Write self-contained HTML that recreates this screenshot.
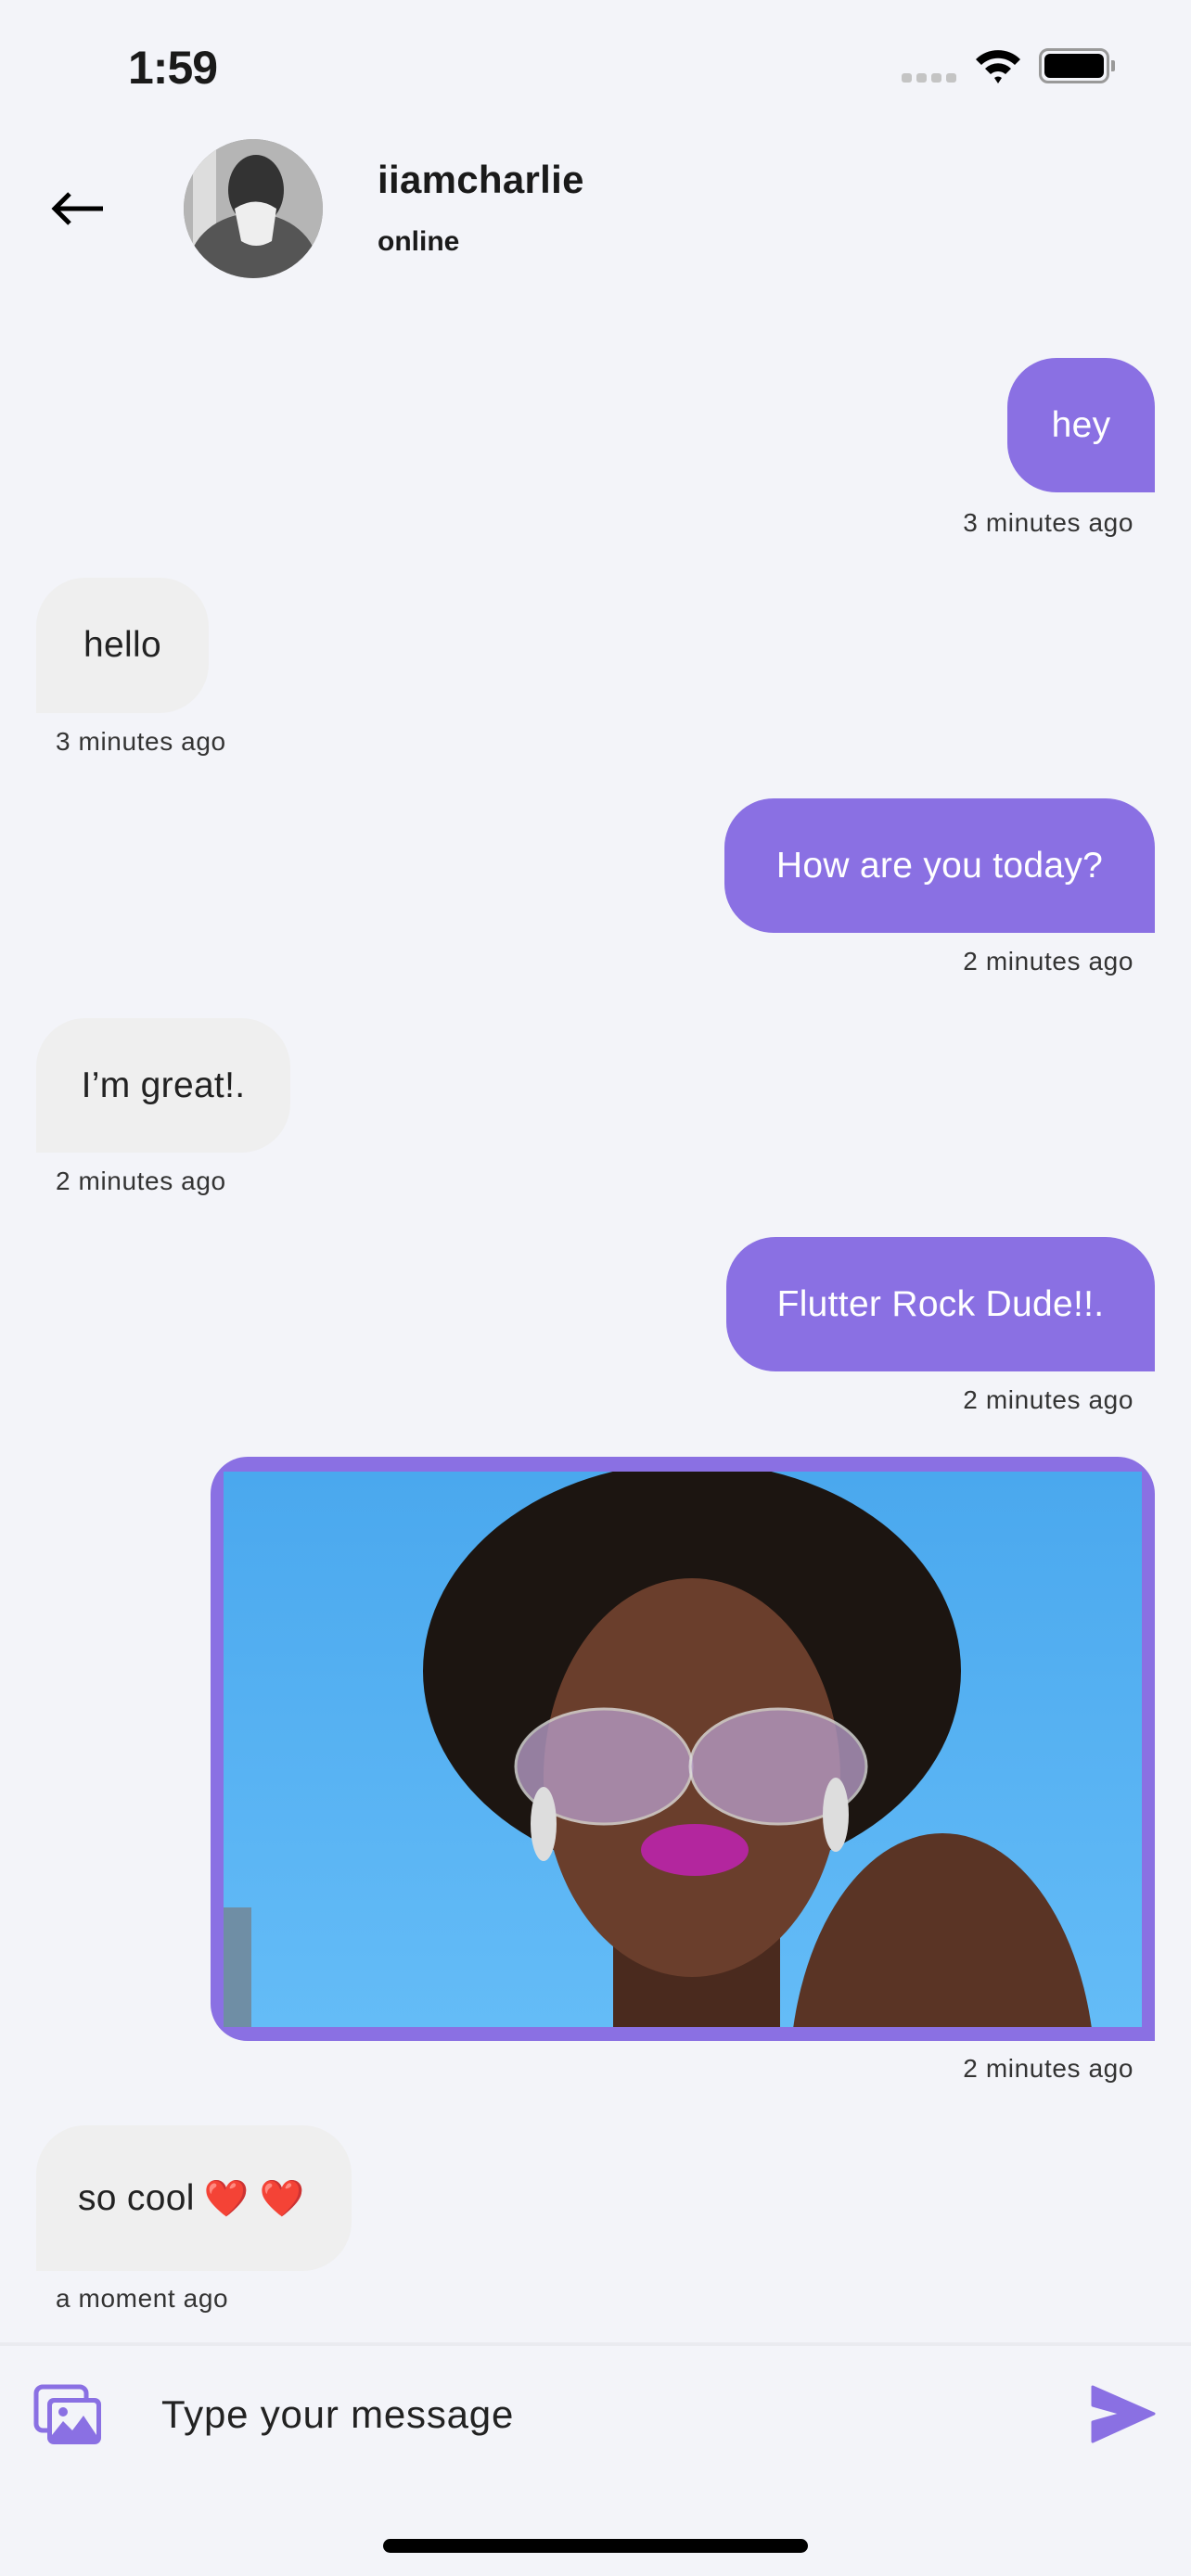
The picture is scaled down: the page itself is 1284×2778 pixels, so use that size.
<!DOCTYPE html>
<html><head><meta charset="utf-8"><style>
*{margin:0;padding:0;box-sizing:border-box}
body{width:1284px;height:2778px;background:#f3f4f9;font-family:"Liberation Sans",sans-serif;position:relative;overflow:hidden;color:#1a1a1a}
.a{position:absolute}
.out{position:absolute;background:#8a70e3;color:#fff;font-size:39px;border-radius:53px 53px 0 53px;display:flex;align-items:center;justify-content:center;letter-spacing:0.3px}
.in{position:absolute;background:#efefef;color:#222;font-size:39px;border-radius:53px 53px 53px 0;display:flex;align-items:center;justify-content:center;letter-spacing:0.3px}
.ts{position:absolute;font-size:28px;color:#333;letter-spacing:0.6px}
.tr{right:62px;text-align:right}
</style></head><body>
<div class="a" style="left:138px;top:44px;font-size:50px;font-weight:bold;letter-spacing:-1px">1:59</div>
<div class="a" style="left:972px;top:79px;width:60px;height:10px">
<span class="a" style="left:0;width:11px;height:10px;background:#c4c4c4;border-radius:3px"></span>
<span class="a" style="left:16px;width:11px;height:10px;background:#c4c4c4;border-radius:3px"></span>
<span class="a" style="left:32px;width:11px;height:10px;background:#c4c4c4;border-radius:3px"></span>
<span class="a" style="left:48px;width:11px;height:10px;background:#c4c4c4;border-radius:3px"></span></div>
<svg class="a" style="left:1050px;top:50px" width="52" height="40" viewBox="0 0 52 40"><path d="M2 14 A34 34 0 0 1 50 14 L44 20 A26 26 0 0 0 8 20Z" fill="#000"/><path d="M12 24 A20 20 0 0 1 40 24 L34 30 A12 12 0 0 0 18 30Z" fill="#000"/><path d="M22 34 L26 40 L30 34 A6 6 0 0 0 22 34Z" fill="#000"/></svg>
<div class="a" style="left:1120px;top:52px;width:76px;height:38px;border:3px solid #999;border-radius:10px;padding:3px"><div style="width:100%;height:100%;background:#000;border-radius:6px"></div></div>
<div class="a" style="left:1198px;top:65px;width:4px;height:12px;background:#999;border-radius:0 2px 2px 0"></div>
<svg class="a" style="left:55px;top:205px" width="60" height="40" viewBox="0 0 60 40"><path d="M56 20 H4 M20 4 L4 20 L20 36" stroke="#000" stroke-width="5" fill="none"/></svg>
<div class="a" style="left:198px;top:150px;width:150px;height:150px;border-radius:50%;overflow:hidden;background:#888">
<svg width="150" height="150"><rect width="150" height="150" fill="#b5b5b5"/><rect x="10" y="0" width="25" height="150" fill="#ddd"/><ellipse cx="75" cy="140" rx="70" ry="60" fill="#555"/><ellipse cx="78" cy="55" rx="30" ry="38" fill="#333"/><path d="M55 75 Q78 60 100 75 L95 110 Q78 120 62 110Z" fill="#eee"/></svg></div>
<div class="a" style="left:407px;top:170px;font-size:42px;font-weight:bold;letter-spacing:0.3px">iiamcharlie</div>
<div class="a" style="left:407px;top:244px;font-size:30px;font-weight:bold">online</div>

<div class="out" style="left:1086px;top:386px;width:159px;height:145px">hey</div>
<div class="ts tr" style="top:548px">3 minutes ago</div>
<div class="in" style="left:39px;top:623px;width:186px;height:146px">hello</div>
<div class="ts" style="left:60px;top:784px">3 minutes ago</div>
<div class="out" style="left:781px;top:861px;width:464px;height:145px">How are you today?</div>
<div class="ts tr" style="top:1021px">2 minutes ago</div>
<div class="in" style="left:39px;top:1098px;width:274px;height:145px">I’m great!.</div>
<div class="ts" style="left:60px;top:1258px">2 minutes ago</div>
<div class="out" style="left:783px;top:1334px;width:462px;height:145px">Flutter Rock Dude!!.</div>
<div class="ts tr" style="top:1494px">2 minutes ago</div>
<div class="a" style="left:227px;top:1571px;width:1018px;height:630px;background:#8a70e3;border-radius:40px 40px 0 40px;padding:16px 14px 15px 14px">
<svg width="990" height="599" viewBox="0 0 990 599" style="display:block">
<defs><linearGradient id="s" x1="0" y1="0" x2="0" y2="1"><stop offset="0" stop-color="#4aa8ee"/><stop offset="1" stop-color="#64bcf7"/></linearGradient></defs>
<rect width="990" height="599" fill="url(#s)"/>
<rect x="0" y="470" width="30" height="129" fill="#6f8ea5"/>
<ellipse cx="775" cy="660" rx="165" ry="270" fill="#5a3425"/>
<rect x="420" y="420" width="180" height="200" fill="#4a2a1e"/>
<ellipse cx="505" cy="215" rx="290" ry="225" fill="#1c1511"/>
<ellipse cx="505" cy="330" rx="160" ry="215" fill="#6a3e2c"/>
<ellipse cx="410" cy="318" rx="95" ry="62" fill="#b49ac4" opacity=".8" stroke="#ddd" stroke-width="3"/>
<ellipse cx="598" cy="318" rx="95" ry="62" fill="#b49ac4" opacity=".8" stroke="#ddd" stroke-width="3"/>
<ellipse cx="508" cy="408" rx="58" ry="28" fill="#b3269e"/>
<ellipse cx="345" cy="380" rx="14" ry="40" fill="#ddd"/><ellipse cx="660" cy="370" rx="14" ry="40" fill="#ddd"/>
</svg></div>
<div class="ts tr" style="top:2215px">2 minutes ago</div>
<div class="in" style="left:39px;top:2292px;width:340px;height:157px;justify-content:flex-start;padding-left:45px">so cool <span style="color:#e0231f;margin-left:10px">❤️ ❤️</span></div>
<div class="ts" style="left:60px;top:2463px">a moment ago</div>
<div class="a" style="left:0;top:2526px;width:1284px;height:4px;background:#eaebf0"></div>
<svg class="a" style="left:36px;top:2571px" width="76" height="66" viewBox="0 0 76 66"><rect x="3" y="3" width="54" height="47" rx="7" fill="none" stroke="#8a70e3" stroke-width="5"/><rect x="15" y="15" width="58" height="50" rx="7" fill="#8a70e3"/><rect x="20" y="20" width="48" height="38" rx="3" fill="#f3f4f9"/><circle cx="32" cy="30" r="5" fill="#8a70e3"/><path d="M20 55 L32 40 L42 50 L54 34 L68 55 V62 H20Z" fill="#8a70e3"/></svg>
<div class="a" style="left:174px;top:2580px;font-size:42px;color:#222;letter-spacing:0.8px">Type your message</div>
<svg class="a" style="left:1176px;top:2572px" width="70" height="63" viewBox="0 0 70 63"><path d="M2 2 L68 31 L2 61 L2 40 L34 31 L2 22Z" fill="#8a70e3" stroke="#8a70e3" stroke-width="3" stroke-linejoin="round"/></svg>
<div class="a" style="left:413px;top:2738px;width:458px;height:15px;background:#000;border-radius:8px"></div>
</body></html>
